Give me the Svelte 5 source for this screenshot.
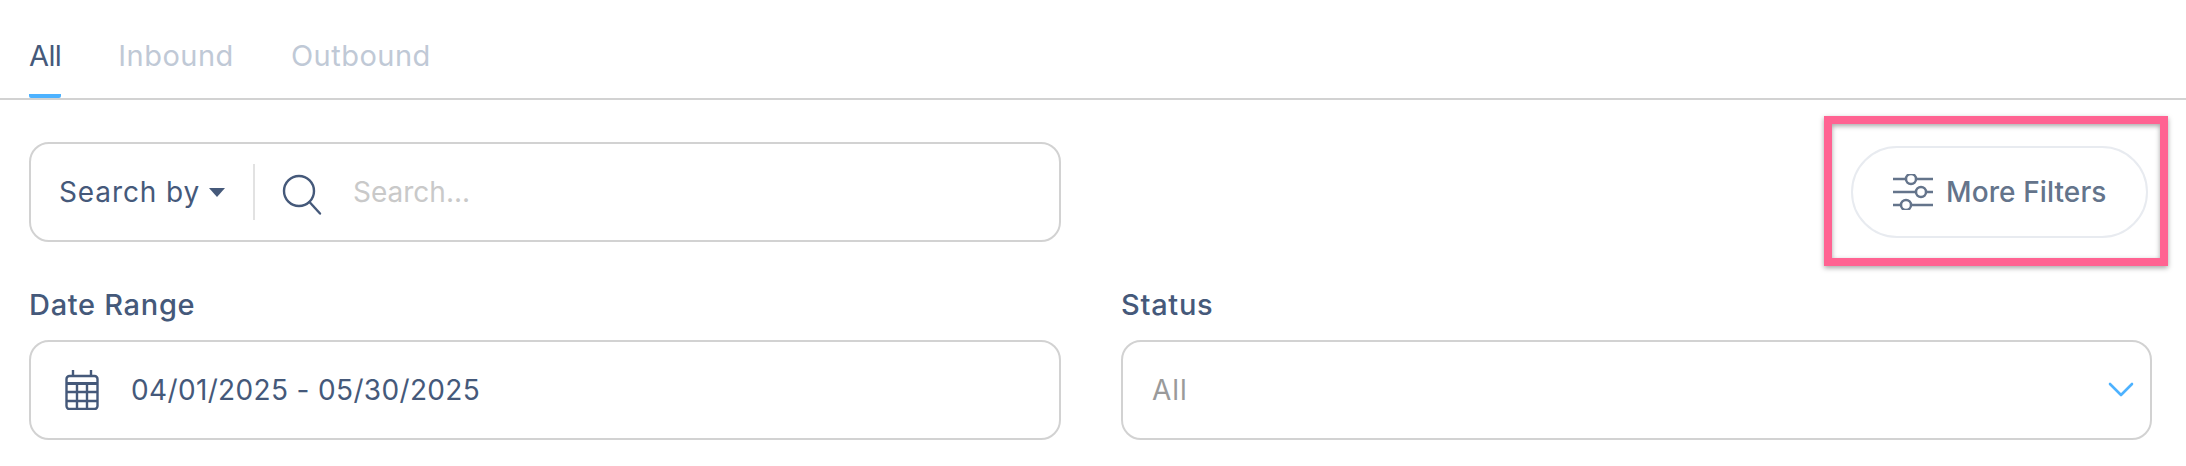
<script>
	const tabs = ["All", "Inbound", "Outbound"];
	let active = "All";
</script>

<div class="page">
	<nav class="tabs">
		{#each tabs as tab}
			<button class="tab" class:active={tab === active} on:click={() => (active = tab)}>{tab}</button>
		{/each}
	</nav>

	<div class="toolbar">
		<div class="box search">
			<span class="search-by">Search by<span class="caret"></span></span>
			<span class="divider"></span>
			<svg class="search-icon" width="40" height="42" viewBox="0 0 40 42" fill="none" stroke="#45597a" stroke-width="2.4">
				<circle cx="17" cy="17" r="15" />
				<path d="M27.5 28 L38 39.5" stroke-linecap="round" />
			</svg>
			<span class="placeholder">Search...</span>
		</div>

		<div class="more-wrap">
			<button class="more">
				<svg width="40" height="36" viewBox="0 0 40 36" fill="none" stroke="#64748b" stroke-width="2.5">
					<path d="M0 5H13M23 5H40M0 18H23M33 18H40M0 31H8M18 31H40" />
					<circle cx="18" cy="5" r="5" />
					<circle cx="28" cy="18" r="5" />
					<circle cx="13" cy="31" r="5" />
				</svg>
				More Filters
			</button>
		</div>
	</div>

	<div class="fields">
		<div class="field">
			<div class="label">Date Range</div>
			<div class="box date">
				<svg width="34" height="40" viewBox="0 0 34 40" fill="none" stroke="#45597a" stroke-width="2.4">
					<rect x="1.5" y="6" width="31" height="33" rx="3" />
					<path d="M1.5 13.5H32.5" stroke-width="3" />
					<path d="M8 0V6M26 0V6M1.5 22H32.5M1.5 31H32.5M12 14V39M22 14V39" />
				</svg>
				<span>04/01/2025 - 05/30/2025</span>
			</div>
		</div>
		<div class="field">
			<div class="label">Status</div>
			<div class="box status">
				<span>All</span>
				<svg width="26" height="16" viewBox="0 0 26 16" fill="none" stroke="#4db2ff" stroke-width="2.6">
					<path d="M2 2L13 13L24 2" stroke-linecap="round" stroke-linejoin="round" />
				</svg>
			</div>
		</div>
	</div>
</div>

<style>
	:global(body) {
		background: #fff;
		font-family: "Inter", "Open Sans", sans-serif;
	}

	.page {
		height: 466px;
		overflow: hidden;
		color: #45597a;
	}

	.tabs {
		display: flex;
		gap: 57px;
		height: 98px;
		padding-left: 29px;
		border-bottom: 2px solid #d2d2d2;
	}

	.tab {
		height: 98px;
		padding: 16px 0 0;
		border: 0;
		background: none;
		font: 400 29px "Inter", sans-serif;
		letter-spacing: 0.5px;
		color: #c0c9d6;
		border-bottom: 4px solid transparent;
	}

	.tab.active {
		color: #45597a;
		border-bottom-color: #4db2ff;
		border-radius: 0 0 2px 2px;
		letter-spacing: -0.6px;
	}

	.toolbar {
		display: flex;
		justify-content: space-between;
		padding: 42px 38px 0 29px;
		height: 102px;
	}

	.box {
		display: flex;
		align-items: center;
		box-sizing: border-box;
		height: 100px;
		background: #fff;
		border: 2px solid #d2d2d2;
		border-radius: 20px;
		font-size: 28px;
	}

	.search {
		width: 1032px;
		padding-left: 28px;
	}

	.search-by {
		display: flex;
		align-items: center;
		width: 194px;
		color: #45597a;
		letter-spacing: 0.9px;
	}

	.caret {
		margin-left: 9px;
		border: 8px solid transparent;
		border-top: 9px solid #45597a;
		border-bottom: 0;
	}

	.divider {
		width: 2px;
		height: 56px;
		background: #e2e2e2;
	}

	.search-icon {
		margin: 5px 31px 0 27px;
	}

	.placeholder {
		color: #c9c9c9;
	}

	.more-wrap {
		position: relative;
		height: 92px;
		margin-top: 4px;
	}

	/* pink annotation round the button */
	.more-wrap::after {
		content: "";
		position: absolute;
		inset: -30px -20px -28px -27px;
		border: 8px solid #ff6392;
		box-shadow: 0 2px 5px rgba(0, 0, 0, 0.35), inset 0 2px 5px rgba(0, 0, 0, 0.35);
		pointer-events: none;
	}

	.more {
		display: flex;
		align-items: center;
		gap: 13px;
		box-sizing: border-box;
		width: 297px;
		height: 92px;
		padding: 0 0 0 40px;
		background: #fff;
		border: 2px solid #e8ebf0;
		border-radius: 46px;
		font: 500 28px "Inter", sans-serif;
		letter-spacing: 0.1px;
		color: #64748b;
		white-space: nowrap;
	}

	.fields {
		display: grid;
		grid-template-columns: 1032px 1031px;
		gap: 60px;
		padding: 42px 0 0 29px;
	}

	.label {
		height: 54px;
		font-size: 29px;
		font-weight: 500;
		letter-spacing: 0.7px;
		line-height: 38px;
		color: #45597a;
	}

	.date {
		gap: 32px;
		padding-left: 34px;
		letter-spacing: 0.35px;
	}

	.status {
		justify-content: space-between;
		padding: 0 16px 0 29px;
		color: #9a9a9a;
		letter-spacing: 1px;
	}
</style>
